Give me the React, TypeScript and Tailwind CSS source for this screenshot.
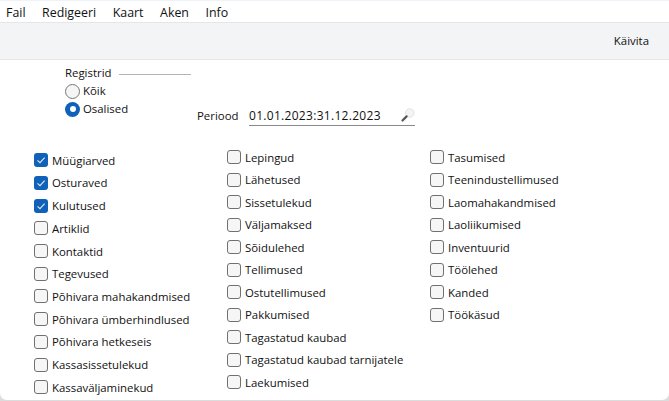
const font = "font-['Open_Sans','Noto_Sans',sans-serif]";

const col1: [string, boolean][] = [
  ["Müügiarved", true],
  ["Osturaved", true],
  ["Kulutused", true],
  ["Artiklid", false],
  ["Kontaktid", false],
  ["Tegevused", false],
  ["Põhivara mahakandmised", false],
  ["Põhivara ümberhindlused", false],
  ["Põhivara hetkeseis", false],
  ["Kassasissetulekud", false],
  ["Kassaväljaminekud", false],
];
const col2 = ["Lepingud", "Lähetused", "Sissetulekud", "Väljamaksed", "Sõidulehed", "Tellimused", "Ostutellimused", "Pakkumised", "Tagastatud kaubad", "Tagastatud kaubad tarnijatele", "Laekumised"];
const col3 = ["Tasumised", "Teenindustellimused", "Laomahakandmised", "Laoliikumised", "Inventuurid", "Töölehed", "Kanded", "Töökäsud"];

function Check({ label, checked = false, wide = false }: { label: string; checked?: boolean; wide?: boolean }) {
  return (
    <div className={`flex items-center gap-[4px] ${wide ? "h-[22.7px]" : "h-[22.5px]"}`}>
      {checked ? (
        <span className="flex h-[14px] w-[14px] shrink-0 items-center justify-center rounded-[3px] bg-[#0f62b8]">
          <svg width="10" height="10" viewBox="0 0 10 10" fill="none">
            <path d="M1.5 5.3 L4 7.6 L8.6 2.6" stroke="#dbe9f7" strokeWidth="1.1" />
          </svg>
        </span>
      ) : (
        <span className="h-[14px] w-[14px] shrink-0 rounded-[3px] border border-[#70706f] bg-[#f6f6f6]" />
      )}
      <span className="whitespace-nowrap">{label}</span>
    </div>
  );
}

export default function App() {
  return (
    <div className={`${font} h-[401px] w-[669px] overflow-hidden bg-[#dcdcdc] text-[11.4px] text-[#111]`}>
      <div className="flex h-[399.5px] flex-col overflow-hidden rounded-b-[7px] bg-white">
        <div className="flex h-[22px] items-center gap-[16.5px] border-t border-[#eef3f9] pl-[6px] pt-[3px] text-[12.4px]">
          <span>Fail</span>
          <span>Redigeeri</span>
          <span>Kaart</span>
          <span>Aken</span>
          <span>Info</span>
        </div>
        <div className="flex h-[38px] items-center justify-end border-y border-[#e6e6e6] bg-[#f3f4f6] pr-[20px] text-[11.4px]">
          Käivita
        </div>
        <div className="flex pl-[65px] pt-[5px]">
          <div className="w-[132px]">
            <div className="flex h-[15px] items-center">
              <span>Registrid</span>
              <span className="ml-[8px] mt-[4px] h-px w-[72px] bg-[#b4b4b4]" />
            </div>
            <div className="mt-[2px] flex h-[18px] items-center gap-[3px]">
              <span className="h-[15px] w-[15px] rounded-full border border-[#777] bg-[#f5f5f5]" />
              <span>Kõik</span>
            </div>
            <div className="flex h-[18px] items-center gap-[3px]">
              <span className="flex h-[15px] w-[15px] items-center justify-center rounded-full bg-[#0f62b8]">
                <span className="h-[6px] w-[6px] rounded-full bg-white" />
              </span>
              <span>Osalised</span>
            </div>
          </div>
          <div className="mt-[41px] flex h-[20px] items-center">
            <span className="w-[52px]">Periood</span>
            <div className="flex h-[20px] w-[166px] items-center justify-between border-b border-[#8a8a8a] text-[12px] tracking-[0.3px]">
              <span>01.01.2023:31.12.2023</span>
              <svg width="15" height="15" viewBox="0 0 15 15">
                <circle cx="9.8" cy="5" r="4.2" fill="#f4f4f4" stroke="#e2e2e2" />
                <path d="M6.6 8.4 L2.5 12.5" stroke="#555" strokeWidth="2.2" strokeLinecap="round" />
              </svg>
            </div>
          </div>
        </div>
        <div className="flex pl-[34px]">
          <div className="mt-[23px] w-[193px]">
            {col1.map(([l, c]) => (
              <Check key={l} label={l} checked={c} wide />
            ))}
          </div>
          <div className="mt-[20px] w-[203px]">
            {col2.map((l) => (
              <Check key={l} label={l} />
            ))}
          </div>
          <div className="mt-[20px]">
            {col3.map((l) => (
              <Check key={l} label={l} />
            ))}
          </div>
        </div>
      </div>
    </div>
  );
}
